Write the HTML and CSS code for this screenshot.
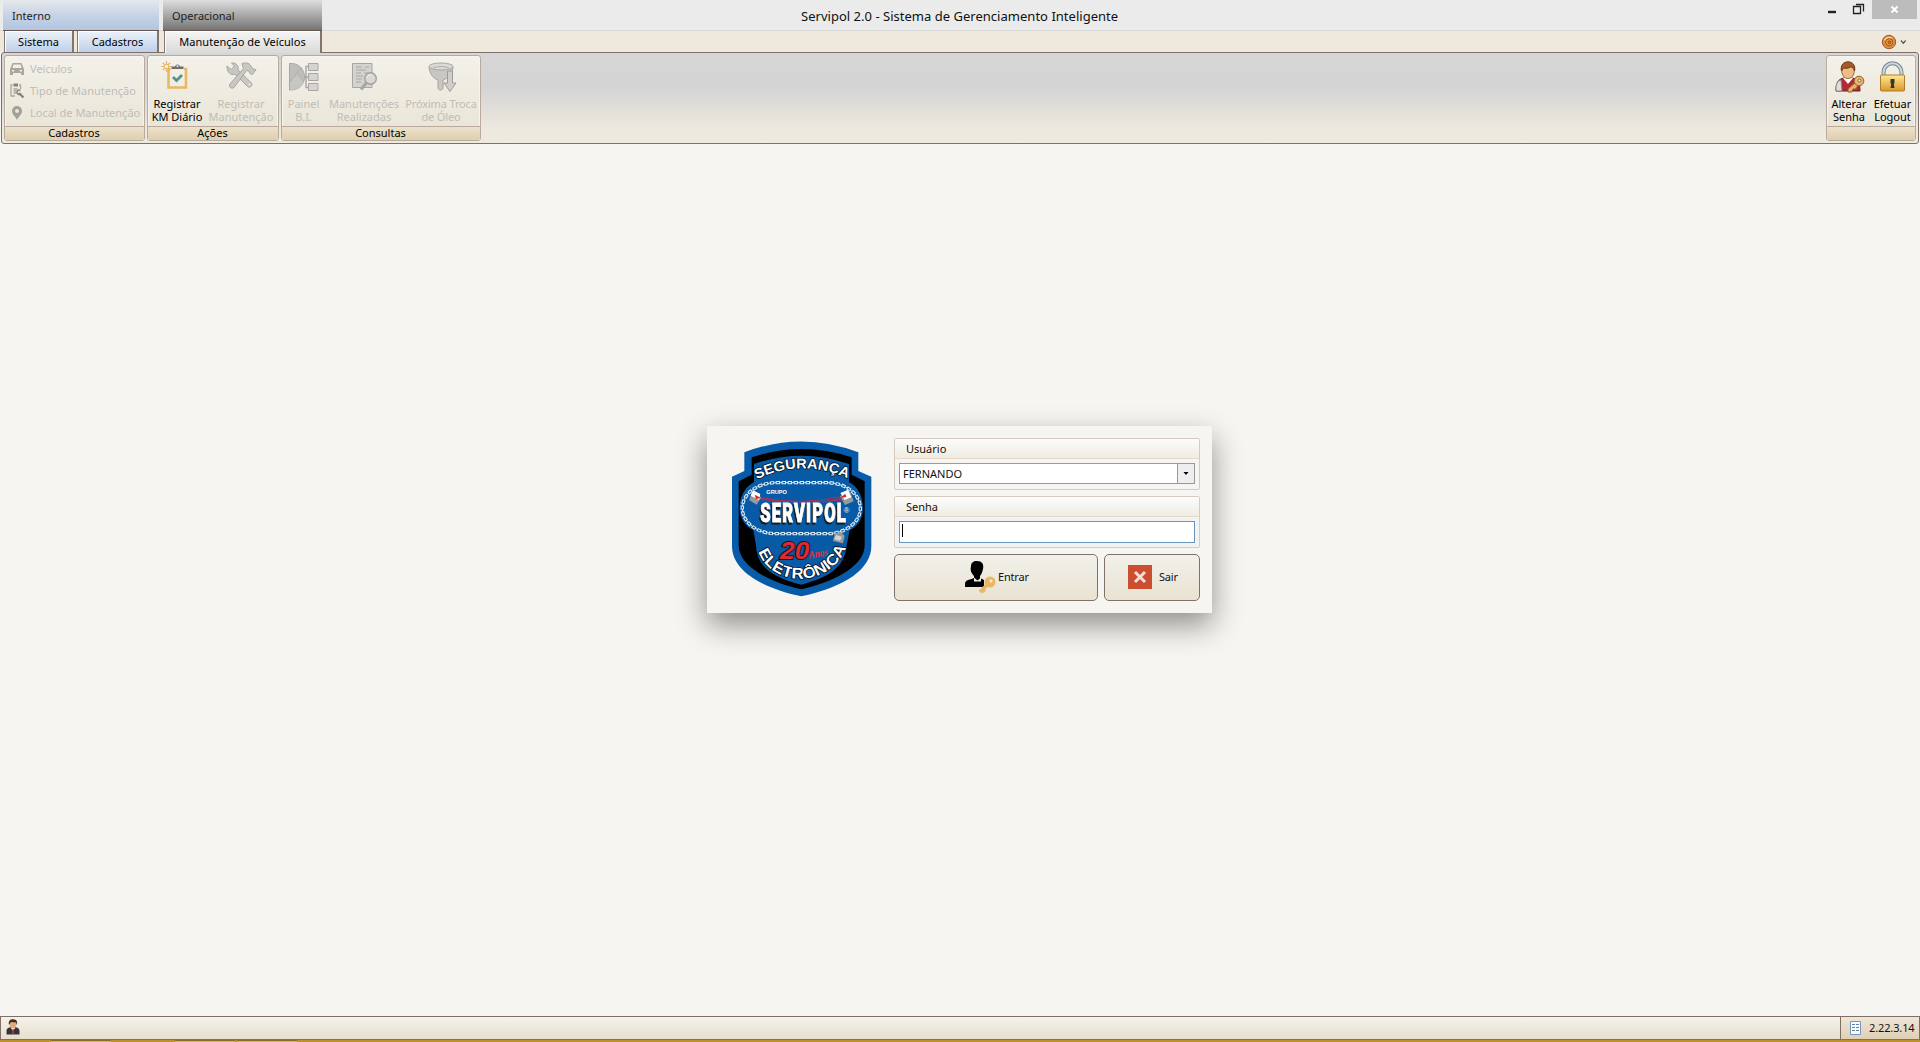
FILE: index.html
```html
<!DOCTYPE html>
<html lang="pt-BR">
<head>
<meta charset="utf-8">
<title>Servipol 2.0</title>
<link rel="stylesheet" href="styles.css">
</head>
<body>
<div class="app">
  <header class="titlebar">
    <div class="context context-blue">Interno</div>
    <div class="context context-gray">Operacional</div>
    <h1 class="title">Servipol 2.0 - Sistema de Gerenciamento Inteligente</h1>
    <div class="window-buttons">
      <svg width="96" height="19" viewBox="0 0 96 19"><path fill="#bcbcbc" d="M49 0h45v19H49z"/><path d="M5 12h8" stroke="#222" stroke-width="2.4"/><path d="M30.500 6.500h7v7h-7zM33 4.500h7.500v7" fill="none" stroke="#222" stroke-width="1.300"/><path d="M68.5 6.5l6 6m0-6l-6 6" stroke="#fff" stroke-width="2"/></svg>
    </div>
  </header>
  <nav class="tabs">
    <div class="tab tab-sistema">Sistema</div>
    <div class="tab tab-cadastros">Cadastros</div>
    <div class="tab tab-active"><span>Manutenção de Veículos</span></div>
    <div class="skin">
      <svg width="28" height="16" viewBox="0 0 28 16"><circle cx="8" cy="8" r="6.7" fill="#dc9142" stroke="#995a28"/><path d="M3.7 6.5a5 5 0 0 1 7-2.5" stroke="#ffd48b" fill="none" stroke-width="1.5"/><circle cx="8.2" cy="8.3" r="3.6" fill="#e9a04c" stroke="#a34d16"/><circle cx="8.4" cy="8.3" r="1.5" fill="#c76a23" stroke="#93420f" stroke-width=".7"/><path d="M20 6.5l2.3 2.7 2.3-2.7" fill="none" stroke="#555" stroke-width="1.2"/></svg>
    </div>
  </nav>
  <section class="ribbon">
    <div class="group group-cad">
      <div class="group-body list">
        <div class="row"><svg width="16" height="16" viewBox="0 0 16 16"><path fill="#aaa79f" fill-rule="evenodd" d="M3.5 2h9l2 5 .5 1v6h-3v-2H4v2H1V8l.5-1zM4.5 3.5L3.3 7h9.4l-1.2-3.5zM3 9v1.6h2.2V9zm7.800 0v1.600H13V9z"/></svg><span>Veículos</span></div>
        <div class="row"><svg width="16" height="16" viewBox="0 0 16 16"><path d="M3.500 2H2v11h4M10 2h1.500v4" fill="none" stroke="#aaa79f" stroke-width="1.300"/><path d="M4.500.5h4.500v3H4.500z" fill="#85827c"/><path d="M4.500 6h4M4.500 8h3M4.500 10h3" stroke="#85827c"/><path d="M10 10l4.500 4.500" stroke="#85827c" stroke-width="2.200"/><path d="M11.500 7.500a2.200 2.200 0 1 0 .5 3" fill="none" stroke="#85827c" stroke-width="1.500"/></svg><span>Tipo de Manutenção</span></div>
        <div class="row"><svg width="16" height="16" viewBox="0 0 16 16"><path fill="#a29f98" fill-rule="evenodd" d="M8 1a5 5 0 0 1 5 5c0 3.500-3.500 5.500-5 9-1.500-3.500-5-5.500-5-9a5 5 0 0 1 5-5zm0 3a2 2 0 1 0 0 4 2 2 0 0 0 0-4z"/></svg><span>Local de Manutenção</span></div>
      </div>
      <div class="caption">Cadastros</div>
    </div>
    <div class="group group-act">
      <div class="group-body big">
        <div class="cmd on c1"><svg width="32" height="32" viewBox="0 0 32 32"><path d="M9.500 8H7.500v18.500h17.500V8h-2" fill="none" stroke="#ebb763" stroke-width="2.600"/><path d="M10.500 8V5.500H14a2.600 2.600 0 0 1 5 0h3.500V8z" fill="#6e6e6e"/><circle cx="16.500" cy="5.300" r="1" fill="#eee"/><path d="M12 16l3.500 3.500 5.500-5.500" fill="none" stroke="#569487" stroke-width="2.800"/><circle cx="5.500" cy="5.500" r="2.200" fill="#fff3d8" stroke="#e6ad50"/><path d="M5.500.3v2.500M5.500 8.200v2.500M.3 5.500h2.500M8.200 5.500h2.500M1.800 1.800l1.800 1.800M7.400 7.400l1.800 1.800M9.200 1.800L7.400 3.600M3.600 7.400L1.800 9.200" stroke="#e6ad50" stroke-width="1.200"/></svg><span>Registrar<br>KM Diário</span></div>
        <div class="cmd c2"><svg width="32" height="32" viewBox="0 0 32 32"><g stroke="#a8a5a0" fill="#c9c7c3"><path d="M2 5l4 3.500L9.500 5 6.500 2c5-.5 7.500 3 6.500 7l13.500 13c1.800 2.500-1.800 5.500-4 3.500L10 13c-4 2-8.500-2-8-8z"/><path d="M17 2.500c5-1.500 8 0 9.500 3.500l1.500 2 3 .5-3.500 5-2.500-1-1-2.500-2.500-.5L9 26.500c-2.500 2-6-1-4-3.500L18.500 7.500z"/></g><circle cx="24.500" cy="23.500" r="1" fill="#eee"/></svg><span>Registrar<br>Manutenção</span></div>
      </div>
      <div class="caption">Ações</div>
    </div>
    <div class="group group-con">
      <div class="group-body big">
        <div class="cmd c3"><svg width="32" height="32" viewBox="0 0 32 32"><path d="M1.500 2.500c8-1 15 5 15 13.500S9.500 29.500 1.500 29z" fill="#c0bebc" stroke="#aaa7a3"/><path d="M2 21l8-9 6 9a15 13 0 0 1-14 8z" fill="#c8c6c4"/><path d="M1.500 21l8-9 6 9M9.500 12l4-6" fill="none" stroke="#b1afab"/><path d="M17 16h4M21 5.500h-3v21h3" fill="none" stroke="#aaa7a3" stroke-width="1.400"/><path d="M20.500 2.500h9.500v7h-9.500zM20.500 12.500h9.500v7h-9.500zM20.500 22.500h9.500v7h-9.500z" fill="#d5d4d2" stroke="#aaa7a3"/></svg><span>Painel<br>B.I.</span></div>
        <div class="cmd c4"><svg width="32" height="32" viewBox="0 0 32 32"><path d="M4.500 2.500h19.500v24H4.500z" fill="#d5d3cf" stroke="#a8a5a0"/><path d="M8 6h6M17 6h4M8 9h10M8 12h5M16 12h5M8 15h7M8 18h6M8 21h5" stroke="#aaa7a3"/><path d="M19 21l-6 7.500" stroke="#a8a5a0" stroke-width="3"/><circle cx="22.500" cy="17.500" r="5.800" fill="#d9d8d5" stroke="#a3a09c" stroke-width="1.400"/><path d="M19 16.500c1-2.500 3-3 5-2" fill="none" stroke="#f1f0ec"/></svg><span>Manutenções<br>Realizadas</span></div>
        <div class="cmd c5"><svg width="32" height="32" viewBox="0 0 32 32"><path d="M4 6c.5 6 3.500 11 9 13v8.500c1.500 2 3.500 2 5 0V19c5.500-2 9.500-7 10-13z" fill="#c9c7c4" stroke="#a5a29e"/><ellipse cx="16" cy="5.500" rx="12" ry="3.500" fill="#dcdad7" stroke="#aaa7a3"/><path d="M8 7c5-2 11-2 16 0" stroke="#b1afab" fill="none"/><path d="M22.500 10h5v12H31l-6 8.500-6-8.500h3.500z" fill="#cfcecb" stroke="#9f9c98"/></svg><span>Próxima Troca<br>de Óleo</span></div>
      </div>
      <div class="caption">Consultas</div>
    </div>
    <div class="group group-user">
      <div class="group-body big">
        <div class="cmd on c6"><svg width="32" height="32" viewBox="0 0 32 32"><path d="M3 30c0-8 2-12 8-13h8c6 1 8 5 8 13z" fill="#b32938" stroke="#691d28"/><path d="M3 30v-5c1-4 3-6 5-6l1 11z" fill="#dedede" stroke="#888"/><path d="M10 17l5 6 5-6z" fill="#fff"/><ellipse cx="15" cy="10" rx="6.300" ry="7.600" fill="#edbd89" stroke="#a36e3c"/><path d="M8.500 10C7 4 11 .8 15 .8s8 3.200 6.500 9.200c-1-3-2-4-4-4-3 2-6 1-7 1z" fill="#a4592b" stroke="#733916"/><path d="M24 20L15 28v3h4l1-3h3l3-6" fill="#e5b16c" stroke="#926126"/><circle cx="26" cy="20" r="4.800" fill="#e7b671" stroke="#926126"/><circle cx="26.500" cy="19.500" r="1.500" fill="#fff4dc" stroke="#926126"/></svg><span>Alterar<br>Senha</span></div>
        <div class="cmd on c7"><svg width="32" height="32" viewBox="0 0 32 32"><defs><linearGradient id="lock" x2="0" y2="1"><stop stop-color="#ffe995"/><stop offset="1" stop-color="#d99928"/></linearGradient></defs><path d="M6.500 15v-3C6.500-1 24.500-1 24.500 12v3" fill="none" stroke="#778693" stroke-width="4"/><path d="M6.500 15v-3C6.500-1 24.500-1 24.500 12v3" fill="none" stroke="#cbd5dc" stroke-width="2"/><rect x="3.500" y="14" width="24" height="16" rx="1" fill="url(#lock)" stroke="#b57b25"/><path d="M13.500 18h4v4l-.7 1 .7 4h-4l.7-4-.7-1z" fill="#3c3529"/></svg><span>Efetuar<br>Logout</span></div>
      </div>
      <div class="caption"></div>
    </div>
  </section>
  <main class="workspace">
    <form class="login">
      <svg class="logo" width="142" height="157" viewBox="90 60 426 471">
        <defs>
          <path id="arcTop" d="M170 178Q305 112 450 178"/>
          <path id="arcBottom" d="M175 395C212 502 395 510 440 376"/>
        </defs>
        <path fill="#075ba8" d="M133 97Q303 32 475 97v56l39 17v208C514 445 440 500 304 529 170 500 96 445 96 378V170l37-17z"/>
        <path fill="#000" d="M155 112Q304 62 455 112v52l39 20v192C494 430 425 480 304 508 184 480 116 430 116 376V184l39-20z"/>
        <path fill="#075aa6" d="M162 132Q305 82 447 132v55c27 12 42 45 42 78s-17 55-40 66l-9 45c-5 65-55 98-136 118-82-20-134-53-136-118l-8-45c-25-14-41-35-41-68s16-63 43-76z"/>
        <g fill="none">
          <rect x="127" y="188" width="354" height="153" rx="100" ry="76" stroke="#dcebf5" stroke-width="3"/>
          <rect x="127" y="188" width="354" height="153" rx="100" ry="76" stroke="#dcebf5" stroke-width="10" stroke-dasharray="13 5"/>
          <rect x="127" y="188" width="354" height="153" rx="100" ry="76" stroke="#075aa6" stroke-width="4" stroke-dasharray="7 11" stroke-dashoffset="-3"/>
        </g>
        <path d="M178 232Q300 257 424 230M180 238Q305 253 425 240M180 234l60 13M370 247l57-14" fill="none" stroke="#a6335b" stroke-width="3"/>
        <path fill="#999" d="M157 215l-10 25 23 14 14-22zM449 211l12 33-26 11-15-26z"/><path fill="#fff" d="M159 211l22 11-4 18-25-13zM421 219l23-10 10 23-20 8z"/><path fill="#d6242c" d="M164 224l18 9-14 5zM420 234l16-13 3 10z"/><path fill="#999" d="M404 342l17-7 13 12-5 23-30-7z"/><path d="M408 345l18 5-6 12-17-4z" fill="#d5d5d5"/>
        <g font-family="Liberation Sans, sans-serif" font-weight="bold" fill="#fff">
          <text font-size="42" stroke="#05172b" stroke-width="5" paint-order="stroke"><textPath href="#arcTop" textLength="282" lengthAdjust="spacingAndGlyphs">SEGURANÇA</textPath></text>
          <text x="199" y="221" font-size="16" textLength="62" lengthAdjust="spacingAndGlyphs">GRUPO</text>
          <text class="brand" transform="translate(181 305) scale(.66 1)" font-family="Roboto, sans-serif" font-weight="900" font-size="75" stroke="#fff" stroke-width="3" textLength="388">SERVIPOL</text>
          <text x="431" y="280" font-size="23" font-weight="normal">®</text>
          <text x="240" y="416" font-size="72" font-style="italic" fill="#de2933" stroke="#16141c" stroke-width="6" paint-order="stroke" textLength="88" lengthAdjust="spacingAndGlyphs">20</text>
          <text x="328" y="416" transform="rotate(-10 328 416)" font-family="Liberation Serif, serif" font-size="33" font-style="italic" fill="#e8303a" textLength="58" lengthAdjust="spacingAndGlyphs">Anos</text>
          <text font-size="46" stroke="#05172b" stroke-width="5" paint-order="stroke"><textPath href="#arcBottom" textLength="336" lengthAdjust="spacingAndGlyphs">ELETRÔNICA</textPath></text>
        </g>
      </svg>
      <div class="fields">
        <div class="field">
          <div class="label">Usuário</div>
          <div class="combo"><span>FERNANDO</span><i><svg width="6" height="4" viewBox="0 0 6 4"><path d="M.5 0h5L3 3z"/></svg></i></div>
        </div>
        <div class="field">
          <div class="label">Senha</div>
          <div class="password"><b></b></div>
        </div>
        <div class="actions">
          <div class="btn enter"><svg width="32" height="34" viewBox="0 0 32 34"><path d="M12 1c5 0 7 3 6 8-1 4-2 6-3 7v2l4 2v7H0v-3c0-4 4-4 9-6v-2C6 13 5 10 6 6c0-3 2-5 6-5z"/><path d="M9 17.500l3.500 3 3.500-3v4H9z" fill="#f0ede2"/><path d="M24 23l-9 9M17 29l2.500 3" stroke="#ebb763" stroke-width="3.800"/><circle cx="25" cy="22" r="5.500" fill="#ebb763"/><circle cx="26" cy="21" r="1.500" fill="#f7efd9"/></svg><span>Entrar</span></div>
          <div class="btn leave"><svg width="24" height="24" viewBox="0 0 24 24"><path fill="#cd4d31" d="M0 0h24v24H0z"/><path d="M7 7l10 10M17 7L7 17" stroke="#f5dfd5" stroke-width="3"/></svg><span>Sair</span></div>
        </div>
      </div>
    </form>
  </main>
  <footer class="status">
    <div class="status-main"><svg width="14" height="16" viewBox="0 0 14 16"><path d="M.5 15.500V12c0-3 3-3.500 4-4h5c1 .500 4 1 4 4v3.500z" fill="#34343a"/><path d="M4.500 8.500L7 12l2.500-3.500z" fill="#fff"/><path d="M6.500 10h1.200l.5 5H6z" fill="#b93232"/><ellipse cx="7" cy="5.500" rx="3.300" ry="4" fill="#e2ab7b"/><path d="M3 6C2 1 5 0 7.500.200S12 2 10.800 6L10 3.500 5 3z" fill="#48281a"/></svg></div>
    <div class="status-version"><svg width="11" height="14" viewBox="0 0 11 14"><path d="M.5.5h10v13H.5z" fill="#f7faff" stroke="#7896b8"/><path d="M2 3.500h3m1 0h3M2 6.500h3m1 0h3M2 9.500h3m1 0h3" stroke="#5f7fa6"/></svg><span>2.22.3.14</span></div>
  </footer>
  <div class="taskbar"><i class="t1"></i><i class="t2"></i><i class="t3"></i></div>
</div>
</body>
</html>
```
FILE: styles.css
```css
* { box-sizing: border-box; }
body { margin: 0; overflow: hidden; font: 11px/13px "Noto Sans", "Open Sans", sans-serif; color: #111; }
svg { display: block; flex: none; }
.app { width: 1920px; height: 1042px; display: flex; flex-direction: column; background: #f6f5f1; }

.titlebar { height: 31px; flex: none; display: flex; background: #ebebeb; border-bottom: 1px solid #d9d9d7; padding-left: 3px; }
.context { height: 31px; padding: 9px 9px 0; color: #222; border-bottom: 1px solid #65574f; }
.context-blue { width: 156px; background: linear-gradient(#e5e8ed, #c7d3e5 50%, #b2c5e1); }
.context-gray { width: 159px; margin-left: 4px; background: linear-gradient(#dedede, #a9a9a9 50%, #747474); }
.title { flex: 1; margin: 0; padding: 8px 0 0 479px; font-size: 13px; line-height: 16px; font-weight: 400; letter-spacing: .02px; }
.window-buttons { width: 96px; margin-right: 1px; }

.tabs { height: 21px; flex: none; display: flex; background: #eee9dc; padding-left: 4px; }
.tab { height: 21px; text-align: center; padding-top: 4px; border: 1px solid #84756c; border-width: 0 2px 0 1px; box-shadow: inset 1px 1px #fff; background: linear-gradient(#edf2f9, #bed0e9); color: #000; }
.tab-sistema { width: 70px; }
.tab-cadastros { width: 82px; margin-left: 3px; }
.tab-active { width: 158px; height: 22px; margin-left: 5px; background: linear-gradient(#f5f5f5, #dadada); z-index: 1; letter-spacing: .03px; }
.skin { margin: 3px 11px 0 auto; }

.ribbon { height: 92px; flex: none; margin: 0 1px; padding: 2px 2px 0; display: flex; gap: 2px; border: 1px solid #806f66; border-radius: 3px; background: linear-gradient(#d6d6d6, #d4d4d4 38%, #eee9df 85%, #efeade); }
.group { height: 86px; border: 1px solid #b9aa9e; border-radius: 3px; background: linear-gradient(#f3f1ea, #e8e3d3); display: flex; flex-direction: column; box-shadow: inset 0 0 0 1px #f7f4ec; }
.group-body { height: 70px; }
.group-cad { width: 141px; }
.group-act { width: 132px; }
.group-con { width: 200px; }
.group-user { width: 90px; margin-left: auto; }
.caption { height: 14px; border-top: 1px solid #b9aa9e; background: linear-gradient(#ece1cb, #dfcfb0); text-align: center; line-height: 12px; color: #000; padding-right: 1px; }
.list { padding: 2px 0 0 4px; color: #bfbdb7; }
.row { height: 22px; display: flex; align-items: center; gap: 5px; white-space: nowrap; }
.row span { margin-top: -1px; }
.big { display: flex; padding-top: 5px; }
.cmd { display: flex; flex-direction: column; align-items: center; text-align: center; white-space: nowrap; color: #bfbdb7; }
.cmd.on { color: #000; }
.cmd span { padding-top: 4px; }
.c1 { width: 58px; }
.c2 { width: 70px; }
.c3 { width: 43px; }
.c4 { width: 78px; }
.c5 { width: 76px; letter-spacing: -.15px; }
.c6 { width: 44px; }
.c7 { width: 43px; }

.workspace { flex: 1; min-height: 0; padding: 282px 0 0 707px; }
.login { width: 505px; height: 187px; display: flex; background: #f6f5f2; box-shadow: 0 12px 28px rgba(0,0,0,.42); padding: 12px 12px 12px 23px; color: #111; }
.logo { margin-top: 2px; }
.brand { filter: drop-shadow(-5px 6px 0 #161a1d); }
.fields { margin-left: 22px; width: 306px; display: flex; flex-direction: column; gap: 6px; }
.field { height: 52px; border: 1px solid #d6cbc0; border-radius: 2px; }
.label { height: 20px; padding: 3px 11px 0; background: linear-gradient(#fdfcfb, #efece3); border-bottom: 1px solid #e5d9c7; }
.combo { height: 21px; margin: 4px; border: 1px solid #999; background: #fff; display: flex; justify-content: space-between; align-items: center; padding-left: 3px; }
.combo i { width: 17px; height: 19px; border-left: 1px solid #999; background: #eee; display: grid; place-items: center; }
.password { height: 22px; margin: 4px; border: 1px solid #6896bd; background: #fff; padding: 2px; box-shadow: 0 0 0 3px #eff3f6; }
.password b { display: block; width: 1px; height: 13px; background: #000; }
.actions { display: flex; gap: 6px; }
.btn { height: 47px; border: 1px solid #80726a; border-radius: 5px; background: linear-gradient(#f2f0e9, #e9e3d2); display: flex; align-items: center; padding-bottom: 2px; }
.btn span { letter-spacing: -.2px; }
.enter { width: 204px; padding-left: 70px; gap: 1px; }
.leave { width: 96px; padding-left: 23px; gap: 7px; }

.status { height: 24px; flex: none; display: flex; border: 1px solid #7e7067; background: linear-gradient(#f5f2eb, #e7dfce); }
.status-main { flex: 1; padding: 2px 5px; }
.status-version { width: 79px; border-left: 1px solid #7e7067; display: flex; align-items: center; padding: 0 0 1px 9px; gap: 8px; letter-spacing: -.12px; background: linear-gradient(#efe7da, #dfcfb4); }
.taskbar { height: 2px; flex: none; display: flex; background: #bb902d; }
.taskbar i { height: 2px; background: #d3b669; border-top: 1px solid #8d6a27; }
.t1 { width: 60px; margin-left: 51px; }
.t2 { width: 60px; margin-left: 64px; }
.t3 { width: 60px; margin-left: 2px; }
```
